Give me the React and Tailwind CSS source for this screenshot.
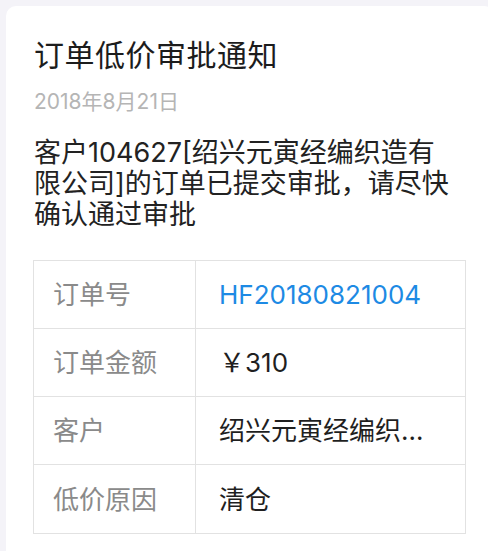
import React from 'react';

const rows = [
  { label: '订单号', value: 'HF20180821004', tone: 'text-[#1d8ae4]' },
  { label: '订单金额', value: '￥310', tone: 'text-[#1f1f1f]' },
  { label: '客户', value: '绍兴元寅经编织造有限公司', tone: 'text-[#1f1f1f]' },
  { label: '低价原因', value: '清仓', tone: 'text-[#1f1f1f]' },
];

export default function App() {
  return (
    <div className="w-[488px] h-[551px] overflow-hidden bg-[#f4f3f8] pl-[6px] pt-[6px] font-['Inter','Noto_Sans_CJK_SC',sans-serif]">
      <div className="w-[488px] h-[600px] bg-white rounded-[10px] px-[28px] pt-[29px]">
        {/* title + date */}
        <h1 className="text-[30px] leading-[40px] text-[#1c1c1c] tracking-[0.5px]">订单低价审批通知</h1>
        <div className="mt-[14px] text-[21px] leading-[26px] text-[#b5b5b5]">2018年8月21日</div>

        {/* message */}
        <p className="mt-[22px] w-[424px] text-[27px] leading-[31px] text-[#222]">
          客户104627[绍兴元寅经编织造有限公司]的订单已提交审批，请尽快确认通过审批
        </p>

        {/* detail table */}
        <div className="mt-[30px] w-[433px] border border-[#e2e2e2] -ml-px">
          {rows.map((r, i) => (
            <div
              key={r.label}
              className={`grid grid-cols-[162px_1fr] h-[68px] ${i < rows.length - 1 ? 'border-b border-[#e2e2e2]' : ''}`}
            >
              <div className="flex items-center pl-[19px] border-r border-[#e2e2e2] text-[26px] text-[#8a8a8a]">
                {r.label}
              </div>
              <div className={`flex items-center pl-[23px] pr-[24px] text-[26px] ${r.tone} min-w-0`}>
                <span className="truncate">{r.value}</span>
              </div>
            </div>
          ))}
        </div>
      </div>
    </div>
  );
}
